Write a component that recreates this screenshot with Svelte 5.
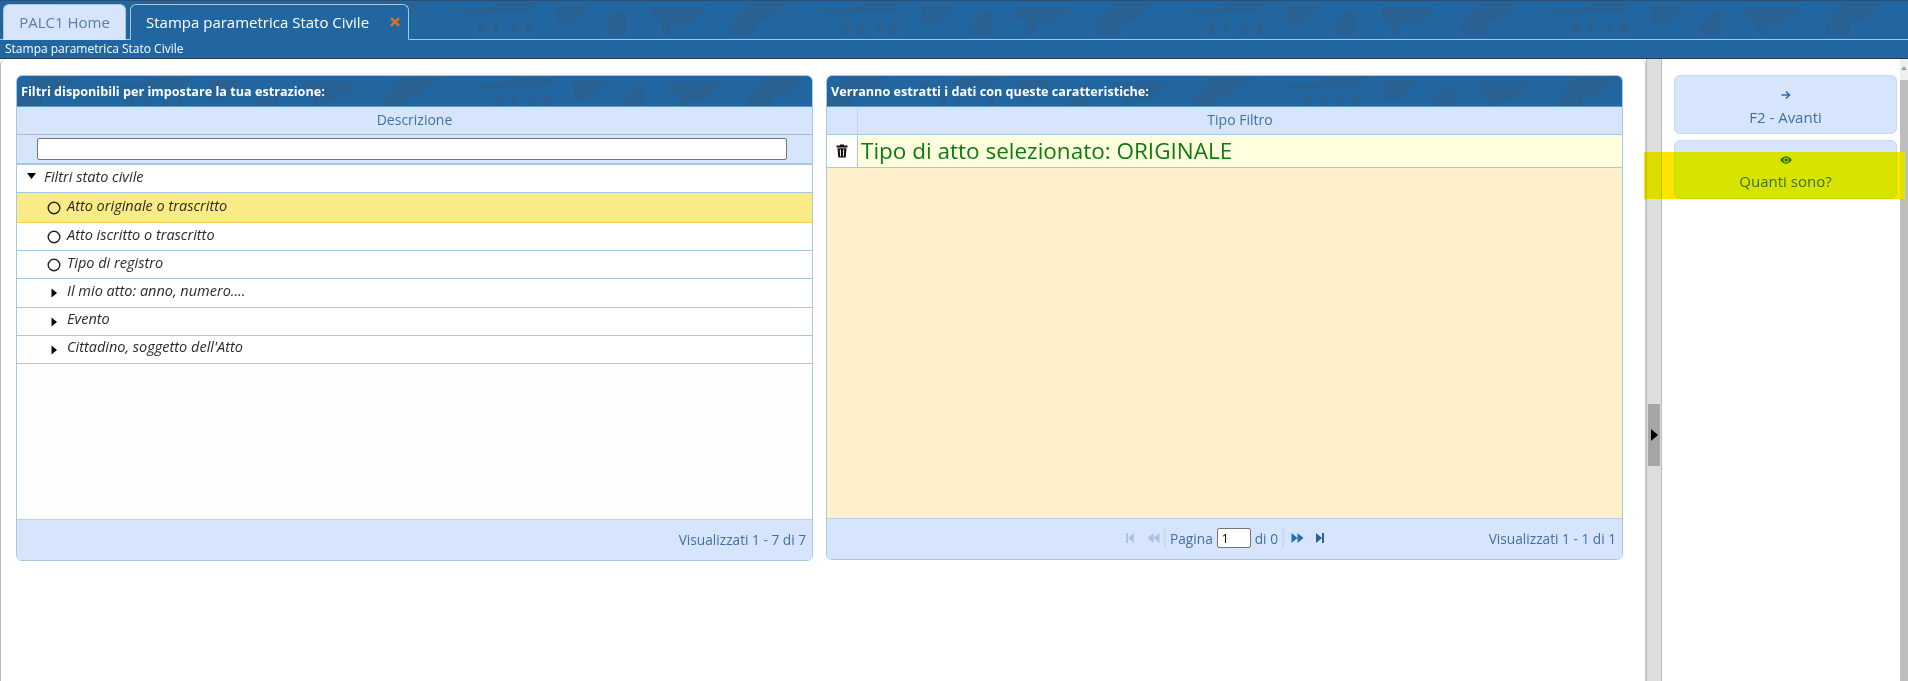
<script>
  const rows = [
    { label: 'Atto originale o trascritto', kind: 'leaf', selected: true },
    { label: 'Atto iscritto o trascritto', kind: 'leaf' },
    { label: 'Tipo di registro', kind: 'leaf' },
    { label: 'Il mio atto: anno, numero....', kind: 'node' },
    { label: 'Evento', kind: 'node' },
    { label: "Cittadino, soggetto dell'Atto", kind: 'node' }
  ]
</script>

{#snippet texture(id)}
  <svg class="texture" aria-hidden="true">
    <defs>
      <pattern {id} width="365" height="40" patternUnits="userSpaceOnUse">
        <path d="M0 34V24L18 2H60L38 20H26V34ZM84 8H122L134 2H176L160 12H96ZM112 34V20H120V34ZM128 34V20H134V34ZM146 34V22H152V34ZM160 34V20H168V34ZM190 4H226L206 24H192ZM240 34V26L252 10H262V34ZM286 6H342L322 24H306V34H296V18H286Z" fill="#29608f" opacity=".8" />
      </pattern>
    </defs>
    <rect width="100%" height="100%" fill="url(#{id})" />
  </svg>
{/snippet}

<div class="page">
  <header class="top">
    <div class="tabs">
      {@render texture('tex-tabs')}
      <button class="tab home" type="button">PALC1 Home</button>
      <button class="tab active" type="button">
        Stampa parametrica Stato Civile
        <svg class="close" viewBox="0 0 10 10" width="10" height="10" aria-hidden="true">
          <path d="M1 1.2 9 8.8M9 1.2 1 8.8" stroke="#e0702a" stroke-width="2.4" fill="none" />
        </svg>
      </button>
    </div>
    <div class="subtitle">Stampa parametrica Stato Civile</div>
  </header>

  <main class="body">
    <section class="content">
      <div class="grid left">
        <div class="caption">
          {@render texture('tex-left')}
          <span>Filtri disponibili per impostare la tua estrazione:</span>
        </div>
        <div class="col-head">Descrizione</div>
        <div class="filter-row"><input type="text" aria-label="Descrizione" /></div>
        <div class="tree">
          <div class="row root">
            <svg class="caret" viewBox="0 0 9 6" width="9" height="6" aria-hidden="true"><path d="M0 0H9L4.5 6Z" /></svg>
            <span>Filtri stato civile</span>
          </div>
          {#each rows as row}
            <div class="row child" class:selected={row.selected}>
              {#if row.kind === 'leaf'}
                <svg class="mark" viewBox="0 0 14 14" width="14" height="14" aria-hidden="true">
                  <circle cx="7" cy="7" r="5.8" fill="none" stroke="#222" stroke-width="1.4" />
                </svg>
              {:else}
                <svg class="mark" viewBox="0 0 14 14" width="14" height="14" aria-hidden="true"><path d="M4.5 2.5 10 7 4.5 11.5Z" /></svg>
              {/if}
              <span>{row.label}</span>
            </div>
          {/each}
        </div>
        <div class="foot">
          <span></span>
          <span></span>
          <span class="count">Visualizzati 1 - 7 di 7</span>
        </div>
      </div>

      <div class="grid right">
        <div class="caption">
          {@render texture('tex-right')}
          <span>Verranno estratti i dati con queste caratteristiche:</span>
        </div>
        <div class="col-head split">
          <div class="cell-icon"></div>
          <div class="cell-label">Tipo Filtro</div>
        </div>
        <div class="result">
          <div class="result-row">
            <div class="cell-icon">
              <svg viewBox="0 0 12 14" width="12" height="14" aria-hidden="true">
                <path d="M4 1.5V.5H8V1.5H11.5V3.4H.5V1.5ZM1.5 4.2H10.5L9.7 13.5H2.3ZM3.8 5.6 4.1 12.2H5L4.8 5.6ZM7.2 5.6 7 12.2H7.9L8.2 5.6Z" fill="#1a0d12" fill-rule="evenodd" />
              </svg>
            </div>
            <div class="result-text">Tipo di atto selezionato: ORIGINALE</div>
          </div>
        </div>
        <div class="foot">
          <span></span>
          <div class="pager">
            <svg class="dim" viewBox="0 0 10 12" width="10" height="12" aria-hidden="true"><path d="M1 1H3V11H1ZM9 1V11L3 6Z" /></svg>
            <svg class="dim wide" viewBox="0 0 13 12" width="13" height="12" aria-hidden="true"><path d="M6.5 1V11L.5 6ZM12.5 1V11L6.5 6Z" /></svg>
            <i class="sep"></i>
            <span>Pagina</span>
            <input type="text" value="1" aria-label="Pagina" />
            <span>di 0</span>
            <i class="sep"></i>
            <svg class="wide" viewBox="0 0 13 12" width="13" height="12" aria-hidden="true"><path d="M.5 1 6.5 6 .5 11ZM6.5 1 12.5 6 6.5 11Z" /></svg>
            <svg class="last" viewBox="0 0 10 12" width="10" height="12" aria-hidden="true"><path d="M1 1 7 6 1 11ZM7 1H9V11H7Z" /></svg>
          </div>
          <span class="count">Visualizzati 1 - 1 di 1</span>
        </div>
      </div>
    </section>

    <div class="splitter">
      <div class="handle">
        <svg viewBox="0 0 7 12" width="7" height="12" aria-hidden="true"><path d="M0 0 7 6 0 12Z" /></svg>
      </div>
    </div>

    <aside class="actions">
      <button class="action" type="button">
        <svg viewBox="0 0 10 10" width="10" height="10" aria-hidden="true">
          <path d="M.5 5H8M5 1.5 8.5 5 5 8.5" fill="none" stroke="#2b6cab" stroke-width="1.6" />
        </svg>
        F2 - Avanti
      </button>
      <button class="action" type="button">
        <svg viewBox="0 0 12 8" width="12" height="8" aria-hidden="true">
          <path d="M.3 4C2 1.4 4 .3 6 .3S10 1.4 11.700 4C10 6.600 8 7.700 6 7.700S2 6.600 .3 4Z" fill="#2b6cab" />
          <circle cx="6" cy="4" r="2.600" fill="#d7e5fc" />
          <circle cx="6" cy="4" r="1.700" fill="#2b6cab" />
        </svg>
        Quanti sono?
      </button>
      <div class="scrollbar">
        <div class="arrow"></div>
        <div class="thumb"></div>
      </div>
    </aside>

    <div class="highlight"></div>
  </main>
</div>

<style>
  :global(body) {
    margin: 0;
    background: #fff;
    overflow: hidden;
  }

  .page {
    display: flex;
    flex-direction: column;
    height: 681px;
    font-family: 'Open Sans', 'Noto Sans', sans-serif;
    color: #222;
    overflow: hidden;
  }

  button {
    font-family: inherit;
  }

  .top {
    background: #2166a1;
    border-bottom: 1px solid #2b3a4a;
  }

  .texture {
    position: absolute;
    inset: 0;
    width: 100%;
    height: 100%;
  }

  .tabs {
    position: relative;
    display: flex;
    align-items: flex-end;
    gap: 4px;
    height: 40px;
    padding-left: 3px;
    border-top: 1px solid #2b4f74;
    border-bottom: 1px solid #a6c9e2;
    box-sizing: border-box;
  }

  .tab {
    position: relative;
    height: 36px;
    margin-bottom: -1px;
    padding: 0;
    border: 1px solid #a6c9e2;
    border-radius: 6px 6px 0 0;
    font-size: 15px;
    box-sizing: border-box;
  }

  .tab.home {
    width: 123px;
    border-bottom-color: #d7e5fc;
    background: #d7e5fc;
    color: #5f7d9c;
  }

  .tab.active {
    display: flex;
    align-items: center;
    width: 279px;
    padding-left: 15px;
    border-bottom-color: #2166a1;
    background: #2166a1;
    color: #fff;
  }

  .close {
    margin-left: 21px;
  }

  .subtitle {
    height: 18px;
    padding-left: 5px;
    color: #fff;
    font-size: 12px;
    line-height: 17px;
  }

  .body {
    position: relative;
    display: flex;
    flex: 1;
    min-height: 0;
  }

  .content {
    display: flex;
    align-items: flex-start;
    gap: 13px;
    width: 1646px;
    padding: 16px 0 0 16px;
    border-top-left-radius: 6px;
    border-top-right-radius: 6px;
    border-left: 1px solid #bbb;
    border-right: 1px solid #ccc;
    box-sizing: border-box;
  }

  .grid {
    display: flex;
    flex-direction: column;
    width: 797px;
    margin-left: -1px;
    border: 1px solid #a6c9e2;
    border-radius: 6px;
    box-sizing: border-box;
    overflow: hidden;
  }

  .grid + .grid {
    margin-left: 0;
  }

  .grid.left {
    height: 486px;
  }

  .grid.right {
    height: 485px;
  }

  .caption {
    position: relative;
    flex: none;
    height: 31px;
    padding-left: 4px;
    background: #2166a1;
    color: #fff;
    font-size: 12.65px;
    font-weight: 700;
    line-height: 30px;
    border-bottom: 1px solid #5c9ccc;
    box-sizing: border-box;
  }

  .caption span {
    position: relative;
  }

  .col-head {
    flex: none;
    height: 28px;
    background: #d7e5fc;
    color: #41709f;
    font-size: 14px;
    line-height: 26px;
    text-align: center;
    border-bottom: 1px solid #a9b9cc;
    box-sizing: border-box;
  }

  .col-head.split {
    display: flex;
    border-bottom-color: #a6c9e2;
  }

  .col-head .cell-icon {
    border-right: 1px solid #c3d5ec;
  }

  .cell-icon {
    display: flex;
    flex: none;
    align-items: center;
    justify-content: center;
    width: 31px;
    box-sizing: border-box;
  }

  .cell-label {
    flex: 1;
  }

  .filter-row {
    flex: none;
    display: flex;
    align-items: center;
    height: 30px;
    padding-left: 20px;
    background: #d7e5fc;
    border-bottom: 2px solid #a6c9e2;
    box-sizing: border-box;
  }

  .filter-row input {
    width: 750px;
    height: 22px;
    padding: 0 4px;
    border: 1px solid #767676;
    border-radius: 2px;
    background: #fff;
    box-sizing: border-box;
  }

  .tree {
    flex: 1;
    background: #fcfffe;
  }

  .row {
    display: flex;
    align-items: center;
    height: 28.2px;
    padding-bottom: 5px;
    border-bottom: 1px solid #a6c9e2;
    background: #fff;
    font-size: 14.5px;
    font-style: italic;
    color: #2b2b2b;
    box-sizing: border-box;
  }

  .row.root {
    height: 28px;
    padding-left: 10px;
    gap: 8px;
  }

  .row.child {
    padding-left: 30px;
    gap: 6px;
  }

  .row.selected {
    height: 30px;
    background: #fbeb87;
    border-bottom-color: #f5d34f;
  }

  .mark {
    margin-top: 6px;
  }

  .foot {
    display: grid;
    flex: none;
    grid-template-columns: 1fr auto 1fr;
    align-items: center;
    height: 41px;
    padding: 0 6px 2px 10px;
    background: #d7e5fc;
    border-top: 1px solid #bcd0e8;
    color: #41709f;
    font-size: 13.7px;
    box-sizing: border-box;
  }

  .count {
    justify-self: end;
    white-space: nowrap;
  }

  .pager {
    display: flex;
    align-items: center;
    gap: 4px;
    margin-left: -3px;
  }

  .pager svg {
    fill: #2b6cab;
  }

  .pager .dim {
    fill: #a9c3e0;
    margin-right: 8px;
  }

  .pager .dim.wide {
    margin-right: 0;
  }

  .pager .wide:not(.dim) {
    margin: 0 7px 0 3px;
  }

  .pager .last {
    fill: #2a6496;
  }

  .sep {
    width: 2px;
    height: 22px;
    background: #c9d9ee;
  }

  .pager input {
    width: 34px;
    height: 20px;
    padding: 0 4px;
    border: 1px solid #767676;
    border-radius: 2px;
    background: #fff;
    font-family: inherit;
    font-size: 12px;
    box-sizing: border-box;
  }

  .result {
    flex: 1;
    background: #fef0ca;
  }

  .result-row {
    display: flex;
    height: 33px;
    background: #ffffe0;
    border-bottom: 1px solid #a6c9e2;
    box-sizing: border-box;
  }

  .result-row .cell-icon {
    background: #fff;
    border-right: 1px solid #a6c9e2;
  }

  .result-text {
    padding-left: 3px;
    color: #0f7a0f;
    font-size: 22.5px;
    line-height: 31px;
  }

  .splitter {
    display: flex;
    align-items: center;
    width: 16px;
    padding-top: 130px;
    background: #ddd;
    border-left: 1px solid #bbb;
    border-right: 1px solid #bbb;
    box-sizing: border-box;
  }

  .handle {
    display: flex;
    align-items: center;
    justify-content: center;
    width: 12px;
    height: 62px;
    margin: 0 auto;
    background: #a6a6a6;
  }

  .actions {
    position: relative;
    flex: 1;
    display: flex;
    flex-direction: column;
    gap: 6px;
    padding: 16px 0 0 12px;
    border-top-left-radius: 6px;
  }

  .action {
    display: flex;
    flex-direction: column;
    align-items: center;
    justify-content: center;
    gap: 7px;
    width: 223px;
    height: 59px;
    padding: 7px 0 0;
    border: 1px solid #c5d9f1;
    border-radius: 6px;
    background: #d7e5fc;
    color: #41709f;
    font-size: 15px;
  }

  .scrollbar {
    position: absolute;
    top: 0;
    right: 0;
    bottom: 0;
    display: flex;
    flex-direction: column;
    width: 8px;
    background: #efefef;
  }

  .arrow {
    flex: none;
    width: 0;
    height: 0;
    margin: 7px auto 7px;
    border-left: 3px solid transparent;
    border-right: 3px solid transparent;
    border-bottom: 4px solid #a0a0a0;
  }

  /* the highlight stops short of the bar's right edge, so the band under it is left pale */
  .thumb {
    flex: 1;
    margin-top: 3px;
    background:
      linear-gradient(#bdbdbd, #bdbdbd) right / 3px 100% no-repeat,
      linear-gradient(#bdbdbd 0 72px, #dce6fb 72px 119px, #bdbdbd 119px);
  }

  .highlight {
    position: absolute;
    top: 93px;
    left: 1644px;
    width: 261px;
    height: 47px;
    background: #ffe400;
    mix-blend-mode: darken;
  }
</style>
